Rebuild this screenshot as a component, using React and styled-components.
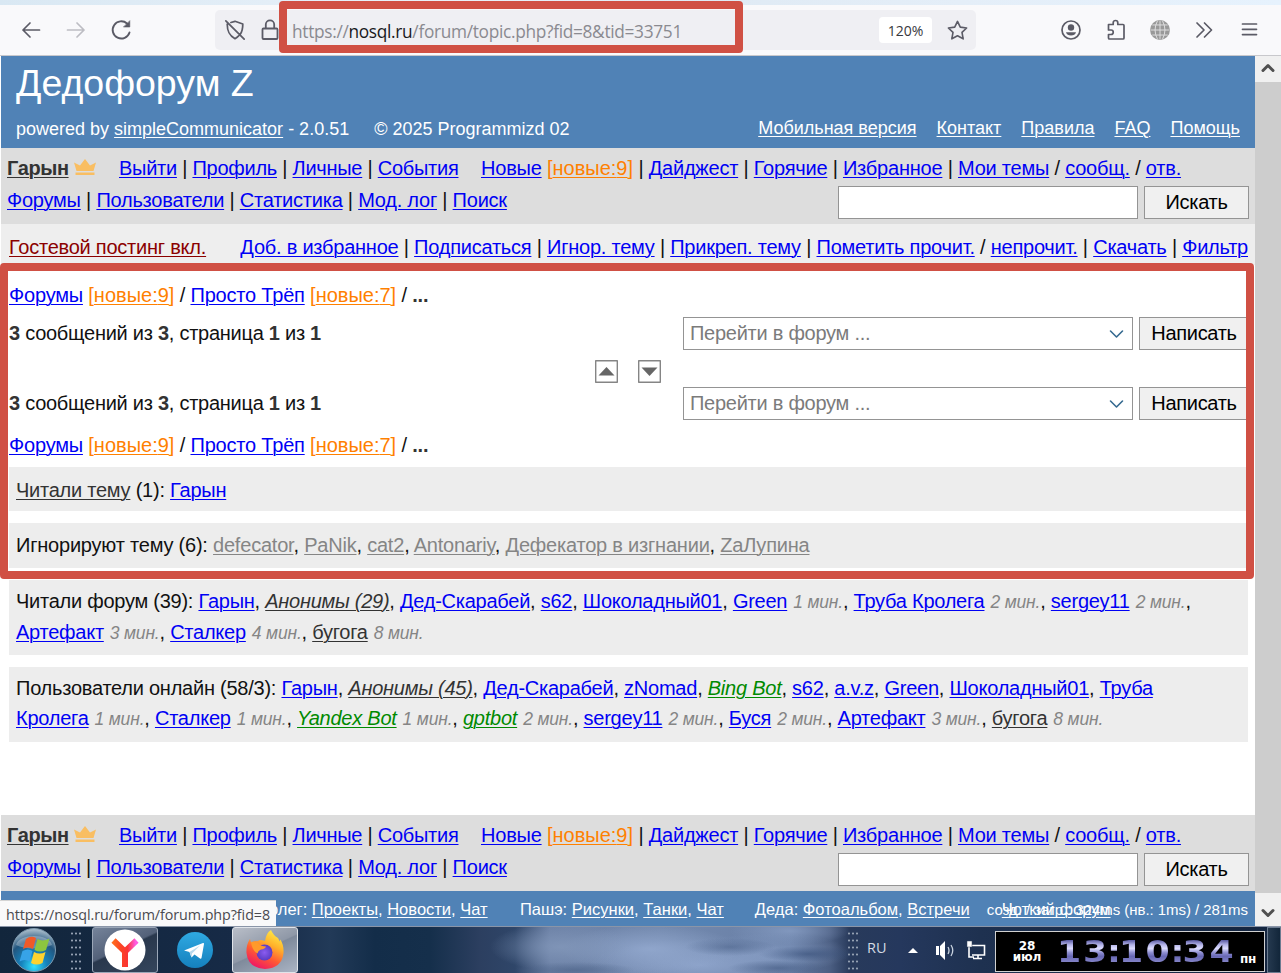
import styled, { createGlobalStyle, css } from "styled-components";

const GlobalStyle = createGlobalStyle`
  * {
    box-sizing: border-box;
  }
  body {
    margin: 0;
    overflow: hidden;
    background: white;
    font-family: "Liberation Sans", Arial, sans-serif;
  }
`;

const Screen = styled.div`
  position: relative;
  width: 1281px;
  height: 973px;
  overflow: hidden;
  display: flex;
  flex-direction: column;
`;

/* browser chrome */
const TabStrip = styled.div`
  height: 5px;
  background: linear-gradient(90deg, #d9e8f3, #eaf2fa 35%, #dfeaf4 55%, #e4eef8 75%, #e6f2fd);
`;
const Toolbar = styled.div`
  height: 51px;
  display: flex;
  align-items: center;
  padding: 0 20px 0 19px;
  background: #f9f9fb;
  border-bottom: 1px solid #c8c8cc;
`;
const ToolGroup = styled.div`
  display: flex;
  align-items: center;
  gap: ${(props) => props.$gap}px;
`;
const Actions = styled(ToolGroup)`
  margin-left: 83px;
`;
const UrlBar = styled.div`
  display: flex;
  align-items: center;
  width: 763px;
  height: 40px;
  margin-left: 82px;
  padding: 0 7px 0 9px;
  border-radius: 5px;
  background: #efeff3;
`;
const UrlText = styled.div`
  flex: 1;
  margin-left: 10px;
  padding-top: 2px;
  font-family: "Open Sans", "Noto Sans", sans-serif;
  font-size: 17.3px;
  letter-spacing: -0.31px;
  white-space: nowrap;
  color: #8a8a90;
`;
const UrlHost = styled.span`
  color: #18181c;
`;
const ZoomBadge = styled.div`
  width: 53px;
  height: 26px;
  margin-right: 14px;
  border-radius: 4px;
  background: white;
  font-family: "Open Sans", "Noto Sans", sans-serif;
  font-size: 14px;
  line-height: 28px;
  text-align: center;
  color: #38383d;
`;

/* page */
const Viewport = styled.div`
  display: flex;
  height: 870px;
  padding-left: 1px;
`;
const Page = styled.div`
  width: 1254px;
  display: flex;
  flex-direction: column;
  font-size: 20px;
  letter-spacing: -0.26px;
  color: #111;
`;
const ScrollBar = styled.div`
  width: 26px;
  display: flex;
  flex-direction: column;
  justify-content: space-between;
  background: #cdcdcd;
`;
const ScrollButton = styled.div`
  height: ${(props) => props.$height}px;
  display: flex;
  align-items: center;
  justify-content: center;
  background: #f0f0f0;
`;

const Header = styled.header`
  height: 92px;
  padding: 4px 15px 0;
  background: #5082b6;
  letter-spacing: 0;
  color: white;
`;
const Title = styled.h1`
  margin: 0;
  font-size: 37.5px;
  font-weight: 400;
  line-height: 46px;
`;
const HeaderRow = styled.div`
  display: flex;
  justify-content: space-between;
  padding-top: 10px;
  font-size: 18px;
  line-height: 27px;
`;
const Copyright = styled.span`
  margin-left: 25px;
`;
const HeaderLinks = styled.div`
  display: flex;
  gap: 20px;
  margin-top: -1px;
`;

const tones = {
  link: "#0000f5",
  light: "#ffffff",
  dark: "#333333",
  grey: "#858585",
  green: "#008a00",
  maroon: "#8b0000",
  orange: "#ff8000",
};
const Link = styled.a`
  color: ${(props) => tones[props.$tone || "link"]};
  text-decoration: underline;
  text-decoration-thickness: 1px;
  text-underline-offset: 2px;
  ${(props) => props.$bold && css`font-weight: 700;`}
  ${(props) => props.$italic && css`font-style: italic;`}
`;
const Orange = styled.span`
  letter-spacing: 0;
  color: #ff8000;
`;
const Ago = styled.i`
  margin-left: 6px;
  font-size: 17.5px;
  letter-spacing: -0.18px;
  color: #858585;
`;

const Menu = styled.nav`
  height: 76px;
  padding: 4px 6px 0 6px;
  background: #dddddd;
`;
const MenuRow = styled.div`
  display: flex;
  height: 32px;
  line-height: 32px;
  white-space: nowrap;
`;
const UserCell = styled.div`
  display: flex;
  align-items: center;
  gap: 5px;
  width: 112px;
  letter-spacing: -0.4px;
`;
const MenuGroup = styled.div`
  width: ${(props) => (props.$width ? `${props.$width}px` : "auto")};
  letter-spacing: ${(props) => props.$spacing}px;
`;
const SearchForm = styled.div`
  display: flex;
  gap: 6px;
  margin: 2px 0 0 auto;
`;
const SearchInput = styled.input`
  width: 300px;
  height: 33px;
  border: 1px solid #949494;
  background: white;
`;
const Button = styled.button`
  width: ${(props) => props.$width}px;
  height: 33px;
  padding: 0;
  border: 1px solid #949494;
  background: #f0f0f0;
  font: 20px "Liberation Sans", Arial, sans-serif;
  letter-spacing: -0.3px;
  color: black;
`;

const TopicBar = styled.div`
  display: flex;
  justify-content: space-between;
  height: 41px;
  padding: 7px 7px 0 8px;
  background: #eeeeee;
  line-height: 32px;
  letter-spacing: -0.23px;
  white-space: nowrap;
`;

const Content = styled.main`
  display: flex;
  flex-direction: column;
  height: 550px;
  padding: 14px 7px 0 8px;
`;
const Crumbs = styled.div`
  height: ${(props) => props.$height}px;
  margin-top: ${(props) => props.$top}px;
  line-height: 32px;
  letter-spacing: -0.2px;
`;
const PagerRow = styled.div`
  display: flex;
  justify-content: space-between;
  height: 33px;
  margin-right: -1px;
  line-height: 32px;
`;
const Num = styled.b`
  color: #333;
`;
const Jump = styled.div`
  display: flex;
  gap: 6px;
`;
const Select = styled.div`
  display: flex;
  align-items: center;
  justify-content: space-between;
  width: 450px;
  height: 33px;
  padding: 0 8px 1px 6px;
  border: 1px solid #949494;
  color: #7b7b7b;
`;
const ArrowRow = styled.div`
  display: flex;
  justify-content: center;
  gap: 20px;
  height: 37px;
  padding: 10px 2px 0 0;
`;
const Block = styled.section`
  min-height: ${(props) => props.$height}px;
  margin-bottom: 12px;
  padding: ${(props) => props.$top}px 7px 0;
  background: #ededed;
  line-height: 30.4px;
  letter-spacing: ${(props) => props.$spacing}px;
`;

const Footer = styled.footer`
  display: flex;
  height: 35px;
  padding: 2px 7px 0 268px;
  background: #5082b6;
  font-size: 16.5px;
  line-height: 33px;
  letter-spacing: 0;
  white-space: nowrap;
  color: white;
`;
const FooterGroup = styled.div`
  width: ${(props) => props.$width}px;
`;
const FooterStack = styled.div`
  display: grid;
  flex: 1;
  > * {
    grid-area: 1 / 1;
  }
`;
const Timing = styled.div`
  font-size: 15px;
  letter-spacing: -0.05px;
  text-align: right;
`;
const FooterSite = styled.div`
  padding-left: 15px;
`;

/* floating parts */
const StatusTip = styled.div`
  position: absolute;
  left: 0;
  top: 900px;
  width: 276px;
  height: 26px;
  padding-left: 6px;
  border-top: 1px solid #d4d4d4;
  background: #f9f9fa;
  font-family: "Open Sans", "Noto Sans", sans-serif;
  font-size: 14.3px;
  line-height: 27px;
  letter-spacing: -0.06px;
  white-space: nowrap;
  color: #4a4a4f;
`;
const Frame = styled.div`
  position: absolute;
  left: ${(props) => props.$x}px;
  top: ${(props) => props.$y}px;
  width: ${(props) => props.$w}px;
  height: ${(props) => props.$h}px;
  border: 8px solid #d05044;
  border-radius: 4px;
  pointer-events: none;
`;

/* taskbar */
const Taskbar = styled.div`
  display: flex;
  height: 47px;
  border-top: 1px solid #8a95a8;
  background:
    radial-gradient(ellipse 60px 8px at 575px 43px, #4a618699, #4a618600),
    radial-gradient(ellipse 45px 9px at 730px 20px, #4a618899, #4a618800),
    radial-gradient(ellipse 50px 8px at 808px 27px, #334b7599, #334b7500),
    radial-gradient(ellipse 50px 8px at 778px 41px, #40577f99, #40577f00),
    radial-gradient(ellipse 70px 24px at 560px 20px, #8499bbcc, #8499bb00),
    radial-gradient(ellipse 90px 24px at 650px 22px, #93a9cfdd, #93a9cf00),
    radial-gradient(ellipse 110px 26px at 700px 38px, #91a7cedd, #91a7ce00),
    radial-gradient(ellipse 80px 20px at 770px 26px, #879dc4bb, #879dc400),
    radial-gradient(ellipse 60px 14px at 790px 4px, #8aa0c6bb, #8aa0c600),
    linear-gradient(90deg, #12263c 0, #172b48 270px, #223a58 330px, #132d49 375px, #152f4b 430px, #2c3f60 480px, #2f4669 515px, #6b80a5 550px, #7389ae 660px, #687fa6 790px, #4b5e82 830px, #283a5b 850px, #25385d 900px, #1e3150 980px, #14253f 1281px);
`;
const StartCell = styled.div`
  width: 70px;
  padding: 1px 0 0 11px;
`;
const Grip = styled.div`
  width: 12px;
  height: 42px;
  margin-top: 3px;
  margin-left: ${(props) => (props.$end ? "auto" : 0)};
  background-image: radial-gradient(circle, #94a0b2 0.8px, transparent 1.3px);
  background-size: 4px 7px;
`;
const TaskButton = styled.div`
  display: flex;
  align-items: center;
  justify-content: center;
  width: 66px;
  height: 46px;
  margin-left: ${(props) => props.$left || 0}px;
  border: 1px solid ${(props) => (props.$active ? "#e0e4ea" : "#9ba7b8")};
  border-radius: 3px;
  background: ${(props) =>
    props.$active
      ? "linear-gradient(155deg, #b9bec8, #8f98a7 48%, #7f8a9b 50%, #aab4c4)"
      : "linear-gradient(155deg, #75839a, #536179 45%, #29384d 48%, #34455c)"};
`;
const PinCell = styled.div`
  display: flex;
  align-items: center;
  justify-content: center;
  width: 74px;
`;
const Tray = styled.div`
  display: flex;
  align-items: flex-start;
  width: 136px;
  padding: 11px 0 0 8px;
`;
const Lang = styled.span`
  width: 41px;
  padding-top: 1px;
  font-family: "Open Sans", "Noto Sans", sans-serif;
  font-size: 14.5px;
  line-height: 18px;
  color: #d3dae3;
`;
const TrayIcon = styled.span`
  width: ${(props) => props.$width}px;
`;
const Clock = styled.div`
  display: flex;
  align-items: center;
  width: 270px;
  height: 41px;
  margin-top: 4px;
  border: 1px solid #d0d0d0;
  background: black;
  color: white;
  font-family: "DejaVu Sans", sans-serif;
  font-weight: 700;
`;
const DateBox = styled.div`
  width: 32px;
  margin-left: 15px;
  font-size: 12px;
  line-height: 11px;
  letter-spacing: -0.2px;
  text-align: center;
`;
const Digits = styled.div`
  display: flex;
  margin-left: 13px;
  font-size: 31px;
  line-height: 34px;
`;
const Digit = styled.span`
  display: flex;
  justify-content: center;
  width: ${(props) => props.$width}px;
  padding: 0 0 2px;
  color: transparent;
  background: linear-gradient(#6161a8 18%, #b4b4e8 30%, #dcdcff 40%, #8d8dd0 52%, #6868b4 62%, #8a8acc 82%);
  background-clip: text;
  transform: scaleX(1.12);
`;
const WeekDay = styled.div`
  margin: 14px 0 0 4px;
  font-size: 12px;
  letter-spacing: -0.2px;
`;
const ShowDesktop = styled.div`
  width: 14px;
  margin-left: 2px;
  border: 1px solid #6b7b90;
  background: linear-gradient(90deg, #25394f, #12263a);
`;

const Icon = ({ size = 24, box = "0 0 24 24", color = "#5b5b66", stroke = 1.7, children }) => (
  <svg
    width={size}
    height={size}
    viewBox={box}
    fill="none"
    stroke={color}
    strokeWidth={stroke}
    strokeLinecap="round"
    strokeLinejoin="round"
    display="block"
  >
    {children}
  </svg>
);

const Crown = () => (
  <svg width="22" height="20" viewBox="0 0 22 20" fill="#f9be62">
    <path d="M0 4.500 6 7.500 11 1l5 6.500 6-3L19.500 13h-17z" />
    <path d="M1.500 14.500h19V17h-19z" />
  </svg>
);

const StartOrb = () => (
  <svg width="46" height="44" viewBox="0 0 46 44">
    <defs>
      <radialGradient id="orb" cx="50%" cy="88%" r="85%">
        <stop offset="0" stopColor="#33e2ff" />
        <stop offset="0.35" stopColor="#1683bd" />
        <stop offset="0.7" stopColor="#22567f" />
        <stop offset="1" stopColor="#a4b9c8" />
      </radialGradient>
    </defs>
    <circle cx="23" cy="22" r="21.500" fill="url(#orb)" stroke="#7d99ae" />
    <path d="M5 17C8 5 38 5 41 17c-10 4-26 5-36 0z" fill="#fff" opacity="0.28" />
    <path d="M15 11q5-4 10-1l-3 11q-5-3-10 0z" fill="#ef5a28" />
    <path d="M26.500 11q5 3 12-.5l-3.500 11.500q-6 3-11.500 0z" fill="#8cc63f" />
    <path d="M11.500 23q5.500-3 10 0l-3 10.500q-5-3-10 0z" fill="#37a3e8" />
    <path d="M23 24q5.500 3 11.500 0L31.500 35q-6 3-11.500 0z" fill="#fdd22f" />
  </svg>
);

const YandexLogo = () => (
  <svg width="42" height="42" viewBox="0 0 42 42">
    <defs>
      <linearGradient id="ya" gradientUnits="userSpaceOnUse" x1="8" y1="0" x2="34" y2="0">
        <stop offset="0.050" stopColor="#ff6a1f" />
        <stop offset="0.350" stopColor="#fb4425" />
        <stop offset="0.600" stopColor="#fb3535" />
        <stop offset="0.900" stopColor="#ff5be0" />
      </linearGradient>
    </defs>
    <circle cx="21" cy="21" r="20.500" fill="#fff" />
    <path d="M9.500 11.500 21 22.500V38M21 22.500l11.500-11" fill="none" stroke="url(#ya)" strokeWidth="6" />
  </svg>
);

const TelegramLogo = () => (
  <svg width="36" height="36" viewBox="0 0 36 36">
    <defs>
      <linearGradient id="tg" x1="0" y1="0" x2="0" y2="1">
        <stop offset="0" stopColor="#2fa9e2" />
        <stop offset="1" stopColor="#1580bd" />
      </linearGradient>
    </defs>
    <circle cx="18" cy="18" r="18" fill="url(#tg)" />
    <path d="M7 18.500 26 11q1.200-.2 1 1L24.500 26q-.4 1.200-1.500.5L17.500 22.500l-3 3-2-5.500z" fill="#fff" />
    <path d="M12.500 20 23 13.500l-8 8-.5 4z" fill="#b9d9ec" />
  </svg>
);

const FirefoxLogo = () => (
  <svg width="40" height="40" viewBox="0 0 40 40">
    <defs>
      <linearGradient id="fx" x1="0.800" y1="0" x2="0.300" y2="1">
        <stop offset="0" stopColor="#fff04a" />
        <stop offset="0.350" stopColor="#ffb22b" />
        <stop offset="0.650" stopColor="#ff5a33" />
        <stop offset="1" stopColor="#ee1467" />
      </linearGradient>
      <radialGradient id="fxc">
        <stop offset="0" stopColor="#8b5cf0" />
        <stop offset="1" stopColor="#5a3cc4" />
      </radialGradient>
    </defs>
    <path
      d="M26 0q2 5 7 8 1 1.500 1.500 3.500l.8-2Q39 15 38.500 23 37 38 20 39 3 38 1.500 23 1 15 5 9l1 3.500q2-1.500 5-1.500 2 .5 4-1 2 0 5 1Q21 3 26 0z"
      fill="url(#fx)"
    />
    <circle cx="19.500" cy="22.500" r="8" fill="url(#fxc)" />
    <path d="M6 12q6-1 8 2 2 2 7 2.500-1 2.500-5 3-3 1-3.500 4-5.500-3-6.500-11.500z" fill="#ff9a2a" />
  </svg>
);

const BrowserBar = () => (
  <Toolbar>
    <ToolGroup $gap={21}>
      <Icon><path d="M4 12h16.500M11 5l-7 7 7 7" /></Icon>
      <Icon color="#bdbdc3"><path d="M3.500 12h16.500M13 5l7 7-7 7" /></Icon>
      <Icon>
        <path d="M20.500 14.500a8.600 8.600 0 1 1-2.500-9" strokeWidth="1.900" />
        <path d="M20.800 3v6h-6z" fill="#5b5b66" strokeWidth="0.600" />
      </Icon>
    </ToolGroup>
    <UrlBar>
      <ToolGroup $gap={12}>
        <Icon size={22} stroke={1.900}>
          <path d="M7.500 3.800 12 2.500l8.500 3c0 6-.8 8.500-2.800 11.200M3.500 5.500c0 8 2 12.500 8.500 16 1.700-.8 2.800-1.800 4-3M2 2l20 20" />
        </Icon>
        <Icon stroke={1.800}>
          <path d="M5.500 10.500h13a1 1 0 0 1 1 1v8.500a1 1 0 0 1-1 1h-13a1 1 0 0 1-1-1v-8.500a1 1 0 0 1 1-1zM7.800 10.500V6.500a4.200 4.200 0 0 1 8.400 0v4" />
        </Icon>
      </ToolGroup>
      <UrlText>
        https://<UrlHost>nosql.ru</UrlHost>/forum/topic.php?fid=8&amp;tid=33751
      </UrlText>
      <ZoomBadge>120%</ZoomBadge>
      <Icon size={23}>
        <path d="M12 2.500l2.900 6 6.600.9-4.800 4.600 1.200 6.700L12 17.500l-5.900 3.200 1.200-6.700L2.500 9.400l6.600-.9z" />
      </Icon>
    </UrlBar>
    <Actions $gap={21}>
      <Icon>
        <circle cx="12" cy="12" r="9" />
        <circle cx="12" cy="9.500" r="3.200" fill="#5b5b66" stroke="none" />
        <path d="M7 14.200h10q-1 3.300-5 3.300t-5-3.300z" fill="#5b5b66" stroke="none" />
      </Icon>
      <Icon>
        <path d="M4.500 6.500h4.700V4.800a2.300 2.300 0 0 1 4.600 0v1.700h5.200a1 1 0 0 1 1 1V20a1 1 0 0 1-1 1H5.500a1 1 0 0 1-1-1v-3.500H7a2.200 2.200 0 0 0 0-4.500H4.500z" />
      </Icon>
      <Icon size={22}>
        <circle cx="12" cy="12" r="10" fill="#999" stroke="#999" />
        <path d="M2 12h20M4 6.500h16M4 17.500h16M12 2v20M9 2.500Q4 12 9 21.500M15 2.500Q20 12 15 21.500" stroke="#e2e2e4" strokeWidth="1" />
      </Icon>
      <Icon><path d="M5 5l7 7-7 7M12.500 5l7 7-7 7" /></Icon>
      <Icon><path d="M5.500 6h14M5.500 11.300h14M5.500 16.600h14" /></Icon>
    </Actions>
  </Toolbar>
);

const NewCount = ({ n }) => (
  <Orange>
    [<Link $tone="orange">новые:{n}</Link>]
  </Orange>
);

const Links = ({ items }) =>
  items.map((item, i) => (
    <span key={item}>
      {i > 0 && " | "}
      <Link>{item}</Link>
    </span>
  ));

const MainMenu = () => (
  <Menu>
    <MenuRow>
      <UserCell>
        <Link $tone="dark" $bold>Гарын</Link>
        <Crown />
      </UserCell>
      <MenuGroup $width={362} $spacing={-0.26}>
        <Links items={["Выйти", "Профиль", "Личные", "События"]} />
      </MenuGroup>
      <MenuGroup $spacing={-0.22}>
        <Link>Новые</Link> <NewCount n={9} /> |{" "}
        <Links items={["Дайджест", "Горячие", "Избранное", "Мои темы"]} /> / <Link>сообщ.</Link> /{" "}
        <Link>отв.</Link>
      </MenuGroup>
    </MenuRow>
    <MenuRow>
      <MenuGroup $spacing={-0.23}>
        <Links items={["Форумы", "Пользователи", "Статистика", "Мод. лог", "Поиск"]} />
      </MenuGroup>
      <SearchForm>
        <SearchInput />
        <Button $width={105}>Искать</Button>
      </SearchForm>
    </MenuRow>
  </Menu>
);

const Breadcrumbs = ({ height, top = 0 }) => (
  <Crumbs $height={height} $top={top}>
    <Link>Форумы</Link> <NewCount n={9} /> / <Link>Просто Трёп</Link> <NewCount n={7} /> / <Num>...</Num>
  </Crumbs>
);

const Pager = () => (
  <PagerRow>
    <span>
      <Num>3</Num> сообщений из <Num>3</Num>, страница <Num>1</Num> из <Num>1</Num>
    </span>
    <Jump>
      <Select>
        Перейти в форум ...
        <Icon size={15} color="#356a90" box="0 0 15 15" stroke={1.600}>
          <path d="M1.500 5l6 6 6-6" />
        </Icon>
      </Select>
      <Button $width={110}>Написать</Button>
    </Jump>
  </PagerRow>
);

const ArrowBox = ({ d }) => (
  <Icon size={23} box="0 0 23 23" color="#858585" stroke={1.400}>
    <path d="M.7.7h21.600v21.600H.700z" />
    <path d={d} fill="#666" stroke="none" />
  </Icon>
);

const readers = [
  { name: "Гарын" },
  { name: "Анонимы (29)", tone: "dark", italic: true },
  { name: "Дед-Скарабей" },
  { name: "s62" },
  { name: "Шоколадный01" },
  { name: "Green", ago: 1 },
  { name: "Труба Кролега", ago: 2 },
  { name: "sergey11", ago: 2 },
  { name: "Артефакт", ago: 3 },
  { name: "Сталкер", ago: 4 },
  { name: "бугога", tone: "dark", ago: 8 },
];
const online = [
  { name: "Гарын" },
  { name: "Анонимы (45)", tone: "dark", italic: true },
  { name: "Дед-Скарабей" },
  { name: "zNomad" },
  { name: "Bing Bot", tone: "green", italic: true },
  { name: "s62" },
  { name: "a.v.z" },
  { name: "Green" },
  { name: "Шоколадный01" },
  { name: "Труба Кролега", ago: 1 },
  { name: "Сталкер", ago: 1 },
  { name: "Yandex Bot", tone: "green", italic: true, ago: 1 },
  { name: "gptbot", tone: "green", italic: true, ago: 2 },
  { name: "sergey11", ago: 2 },
  { name: "Буся", ago: 2 },
  { name: "Артефакт", ago: 3 },
  { name: "бугога", tone: "dark", ago: 8 },
];
const ignoring = ["defecator", "PaNik", "cat2", "Antonariy", "Дефекатор в изгнании", "ZaЛупина"].map((name) => ({
  name,
  tone: "grey",
}));

const Users = ({ list }) =>
  list.map((user, i) => (
    <span key={user.name}>
      {i > 0 && ", "}
      <Link $tone={user.tone} $italic={user.italic}>{user.name}</Link>
      {user.ago && <Ago>{user.ago} мин.</Ago>}
    </span>
  ));

const clockCells = [
  ["1", 26],
  ["3", 26],
  [":", 12],
  ["1", 22],
  ["0", 31],
  [":", 9],
  ["3", 25],
  ["4", 29],
];

const App = () => {
  return (
    <Screen>
      <GlobalStyle />
      <TabStrip />
      <BrowserBar />
      <Viewport>
        <Page>
          <Header>
            <Title>Дедофорум Z</Title>
            <HeaderRow>
              <span>
                powered by <Link $tone="light">simpleCommunicator</Link> - 2.0.51
                <Copyright>© 2025 Programmizd 02</Copyright>
              </span>
              <HeaderLinks>
                {["Мобильная версия", "Контакт", "Правила", "FAQ", "Помощь"].map((item) => (
                  <Link key={item} $tone="light">{item}</Link>
                ))}
              </HeaderLinks>
            </HeaderRow>
          </Header>
          <MainMenu />
          <TopicBar>
            <Link $tone="maroon">Гостевой постинг вкл.</Link>
            <div>
              <Links items={["Доб. в избранное", "Подписаться", "Игнор. тему", "Прикреп. тему", "Пометить прочит."]} />
              {" / "}
              <Link>непрочит.</Link> | <Links items={["Скачать", "Фильтр"]} />
            </div>
          </TopicBar>
          <Content>
            <Breadcrumbs height={38} />
            <Pager />
            <ArrowRow>
              <ArrowBox d="M3.500 15.500h16l-8-8.500z" />
              <ArrowBox d="M3.500 7.500h16l-8 8.500z" />
            </ArrowRow>
            <Pager />
            <Breadcrumbs height={38} top={9} />
            <Block $height={44} $top={8} $spacing={-0.24}>
              <Link $tone="dark">Читали тему</Link> (1): <Link>Гарын</Link>
            </Block>
            <Block $height={45} $top={7} $spacing={-0.21}>
              Игнорируют тему (6): <Users list={ignoring} />
            </Block>
            <Block $height={75} $top={6} $spacing={-0.25}>
              Читали форум (39): <Users list={readers} />
            </Block>
            <Block $height={75} $top={6} $spacing={-0.24}>
              Пользователи онлайн (58/3): <Users list={online} />
            </Block>
          </Content>
          <MainMenu />
          <Footer>
            <FooterGroup $width={251}>
              олег: <Link $tone="light">Проекты</Link>, <Link $tone="light">Новости</Link>,{" "}
              <Link $tone="light">Чат</Link>
            </FooterGroup>
            <FooterGroup $width={235}>
              Пашэ: <Link $tone="light">Рисунки</Link>, <Link $tone="light">Танки</Link>,{" "}
              <Link $tone="light">Чат</Link>
            </FooterGroup>
            <FooterGroup $width={232}>
              Деда: <Link $tone="light">Фотоальбом</Link>, <Link $tone="light">Встречи</Link>
            </FooterGroup>
            <FooterStack>
              <FooterSite><Link $tone="light">Чоткий форум</Link></FooterSite>
              <Timing>созд. / загр.: 324ms (нв.: 1ms) / 281ms</Timing>
            </FooterStack>
          </Footer>
        </Page>
        <ScrollBar>
          <ScrollButton $height={26}>
            <Icon size={16} box="0 0 16 16" stroke={3} color="#505050"><path d="M3 9.500l5-5 5 5" /></Icon>
          </ScrollButton>
          <ScrollButton $height={33}>
            <Icon size={16} box="0 0 16 16" stroke={3} color="#505050"><path d="M3 8.500l5 5 5-5" /></Icon>
          </ScrollButton>
        </ScrollBar>
      </Viewport>
      <Taskbar>
        <StartCell><StartOrb /></StartCell>
        <Grip />
        <TaskButton $left={10}><YandexLogo /></TaskButton>
        <PinCell><TelegramLogo /></PinCell>
        <TaskButton $active><FirefoxLogo /></TaskButton>
        <Grip $end />
        <Tray>
          <Lang>RU</Lang>
          <TrayIcon $width={27}>
            <svg width="10" height="20" viewBox="0 0 10 20"><path d="M0 15l5-5 5 5z" fill="#fff" /></svg>
          </TrayIcon>
          <TrayIcon $width={31}>
            <svg width="20" height="24" viewBox="0 0 20 24">
              <path d="M1 8h3v9H1zM5 8l5-5v19l-5-5z" fill="#fff" />
              <path d="M13 9q2 3.500 0 7M16 7q3.500 5.500 0 11" fill="none" stroke="#c9d3df" strokeWidth="1.300" />
            </svg>
          </TrayIcon>
          <svg width="20" height="22" viewBox="0 0 20 22">
            <path d="M5 7.500h13.500v9.500H6M12 17v3M7 20.500h9M3 9v10h5" fill="none" stroke="#fff" strokeWidth="1.600" />
            <path d="M1 3h5v6H1z" fill="#fff" stroke="#384a63" strokeWidth="0.500" />
          </svg>
        </Tray>
        <Clock>
          <DateBox>28<br />июл</DateBox>
          <Digits>
            {clockCells.map(([char, width], i) => (
              <Digit key={i} $width={width}>{char}</Digit>
            ))}
          </Digits>
          <WeekDay>пн</WeekDay>
        </Clock>
        <ShowDesktop />
      </Taskbar>
      <StatusTip>https://nosql.ru/forum/forum.php?fid=8</StatusTip>
      <Frame $x={279} $y={1} $w={464} $h={52} />
      <Frame $x={0} $y={263} $w={1254} $h={316} />
    </Screen>
  );
};

export default App;
